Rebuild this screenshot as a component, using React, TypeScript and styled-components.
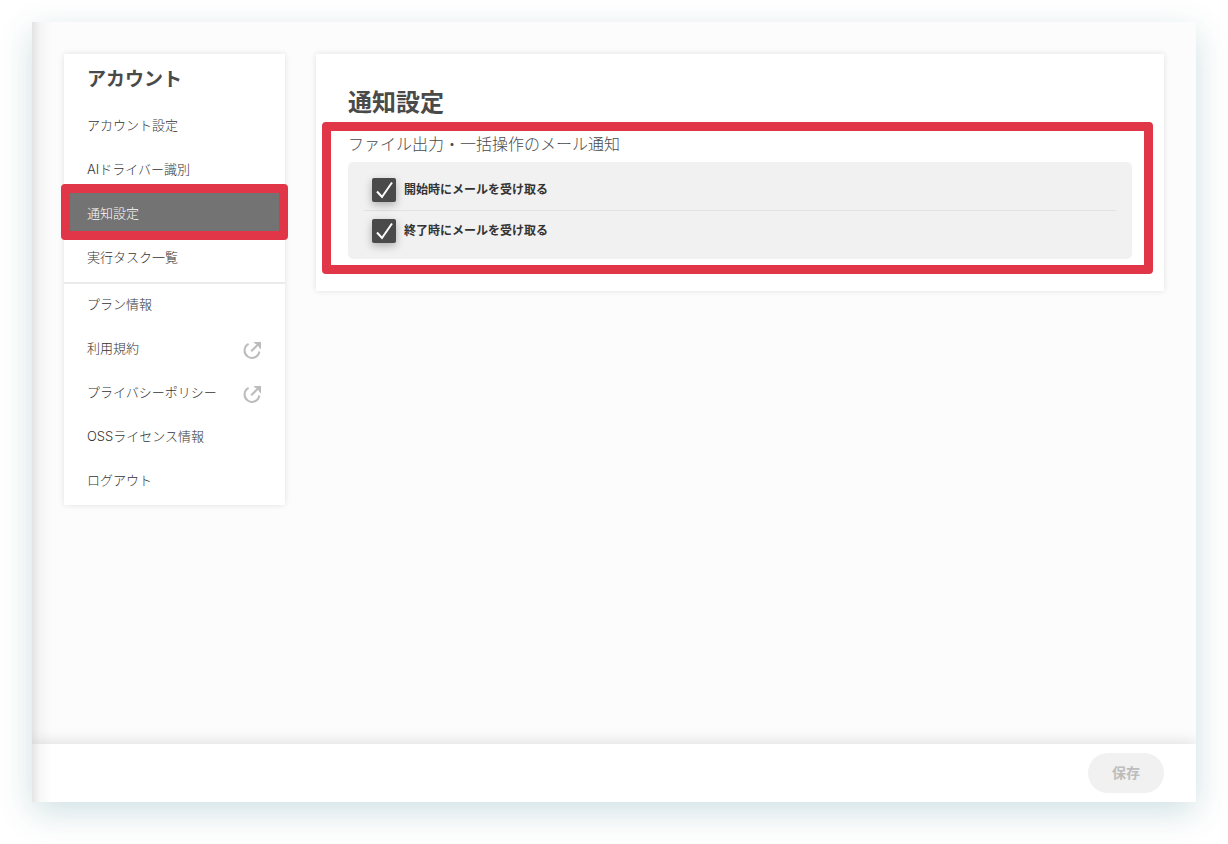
import React from "react";
import styled, { createGlobalStyle, css } from "styled-components";

const Global = createGlobalStyle`
  * { box-sizing: border-box; }
  body {
    margin: 0;
    background: #fff;
    color: #4a4a4a;
    font-family: Inter, "Noto Sans CJK JP", sans-serif;
  }
`;

const Page = styled.div`
  display: flex;
  min-height: 100vh;
  padding: 22px 32px 42px;
`;

const Window = styled.div`
  position: relative;
  flex: 1;
  min-width: 0;
  display: flex;
  flex-direction: column;
  background: #fcfcfc;
  box-shadow: 0 10px 32px rgba(0, 90, 105, 0.19);
  &::after {
    content: "";
    position: absolute;
    inset: 0 auto 0 0;
    width: 20px;
    background: linear-gradient(to right, rgba(0, 0, 0, 0.1), rgba(0, 0, 0, 0.03) 40%, transparent);
    pointer-events: none;
  }
`;

const Content = styled.div`
  flex: 1;
  display: flex;
  align-items: flex-start;
  gap: 31px;
  padding: 32px;
`;

const cardStyle = css`
  background: #fff;
  box-shadow: 0 0 6px rgba(0, 0, 0, 0.11);
`;

const Sidebar = styled.nav`
  ${cardStyle}
  flex: 0 0 221px;
`;

const SidebarTitle = styled.h2`
  margin: 0;
  padding: 3px 0 0 23px;
  font-size: 19px;
  line-height: 46px;
  font-weight: 700;
`;

const MenuGroup = styled.ul<{ $divided?: boolean }>`
  list-style: none;
  margin: 0;
  padding: 0 0 3px;
  box-shadow: ${(p) => (p.$divided ? "inset 0 2px #ebebeb" : "none")};
`;

const MenuItem = styled.li`
  position: relative;
`;

const MenuLink = styled.a<{ $active?: boolean }>`
  display: flex;
  align-items: center;
  justify-content: space-between;
  height: 44px;
  padding: 0 24px 0 23px;
  font-size: 13px;
  line-height: 20px;
  font-weight: 300;
  text-decoration: none;
  color: ${(p) => (p.$active ? "#fff" : "#333")};
  background: ${(p) => (p.$active ? "#737373" : "transparent")};
  svg {
    margin-top: 4px;
  }
`;

const Highlight = styled.span<{ $inset: string }>`
  position: absolute;
  inset: ${(p) => p.$inset};
  border: 9px solid #e03648;
  border-radius: 4px;
  pointer-events: none;
`;

const Card = styled.main`
  ${cardStyle}
  flex: 1;
  min-width: 0;
  padding: 32px;
`;

const Title = styled.h1`
  margin: 0 0 10px;
  font-size: 24px;
  line-height: 34px;
  font-weight: 700;
`;

const Section = styled.section`
  position: relative;
`;

const SectionTitle = styled.h2`
  margin: 0 0 4px;
  font-size: 16px;
  line-height: 28px;
  font-weight: 300;
`;

const OptionBox = styled.div`
  padding: 8px 16px;
  border-radius: 5px;
  background: #f1f1f1;
`;

const Option = styled.label`
  display: flex;
  align-items: center;
  gap: 8px;
  padding: 8px;
  font-size: 12px;
  line-height: 24px;
  font-weight: 700;
  color: #333;
  & + & {
    border-top: 1px solid #e2e2e2;
  }
`;

const CheckFrame = styled.span`
  display: grid;
  > * {
    grid-area: 1 / 1;
  }
  svg {
    pointer-events: none;
  }
`;

const CheckInput = styled.input`
  appearance: none;
  width: 24px;
  height: 24px;
  margin: 0;
  border-radius: 2px;
  background: #fff;
  box-shadow: 0 3px 8px rgba(0, 0, 0, 0.28);
  &:checked {
    background: #4a4a4a;
  }
`;

const Footer = styled.footer`
  display: flex;
  justify-content: flex-end;
  padding: 9px 32px;
  background: #fff;
  box-shadow: 0 -1px 14px rgba(0, 0, 0, 0.13);
  clip-path: inset(-20px 0 0 0);
`;

const SaveButton = styled.button`
  width: 76px;
  height: 40px;
  padding: 0 0 2px;
  border: 0;
  border-radius: 20px;
  background: #f1f1f1;
  color: #bdbdbd;
  font: 700 14px/20px "Noto Sans CJK JP", sans-serif;
`;

const ExternalIcon = () => (
  <svg width="18" height="18" viewBox="0 0 18 18" fill="none" stroke="#bcbcbc" strokeWidth="2" aria-hidden="true">
    <path d="M5.6 2.9A7.4 7.4 0 1 0 16.3 10.5" />
    <path d="M8.2 10.3L14.5 4" />
    <path d="M10.5 1H18V8.5L16 6.5V6L13 3H12.5Z" fill="#bcbcbc" stroke="none" />
  </svg>
);

const CheckOption = ({ text }: { text: string }) => (
  <Option>
    <CheckFrame>
      <CheckInput type="checkbox" defaultChecked />
      <svg width="24" height="24" viewBox="0 0 24 24" fill="none" stroke="#fff" strokeWidth="2" aria-hidden="true">
        <path d="M5 13.5L10 19L20 4.5" />
      </svg>
    </CheckFrame>
    {text}
  </Option>
);

type Entry = { text: string; active?: boolean; external?: boolean };

const accountEntries: Entry[] = [
  { text: "アカウント設定" },
  { text: "AIドライバー識別" },
  { text: "通知設定", active: true },
  { text: "実行タスク一覧" },
];

const infoEntries: Entry[] = [
  { text: "プラン情報" },
  { text: "利用規約", external: true },
  { text: "プライバシーポリシー", external: true },
  { text: "OSSライセンス情報" },
  { text: "ログアウト" },
];

const Menu = ({ entries, divided }: { entries: Entry[]; divided?: boolean }) => (
  <MenuGroup $divided={divided}>
    {entries.map((e) => (
      <MenuItem key={e.text}>
        <MenuLink href="#" $active={e.active} aria-current={e.active ? "page" : undefined}>
          {e.text}
          {e.external && <ExternalIcon />}
        </MenuLink>
        {e.active && <Highlight $inset="-7px -3px -5px" />}
      </MenuItem>
    ))}
  </MenuGroup>
);

export default function App() {
  return (
    <Page>
      <Global />
      <Window>
        <Content>
          <Sidebar>
            <SidebarTitle>アカウント</SidebarTitle>
            <Menu entries={accountEntries} />
            <Menu entries={infoEntries} divided />
          </Sidebar>
          <Card>
            <Title>通知設定</Title>
            <Section>
              <SectionTitle>ファイル出力・一括操作のメール通知</SectionTitle>
              <OptionBox>
                <CheckOption text="開始時にメールを受け取る" />
                <CheckOption text="終了時にメールを受け取る" />
              </OptionBox>
              <Highlight $inset="-8px -21px -15px -26px" />
            </Section>
          </Card>
        </Content>
        <Footer>
          <SaveButton type="button" disabled>
            保存
          </SaveButton>
        </Footer>
      </Window>
    </Page>
  );
}
